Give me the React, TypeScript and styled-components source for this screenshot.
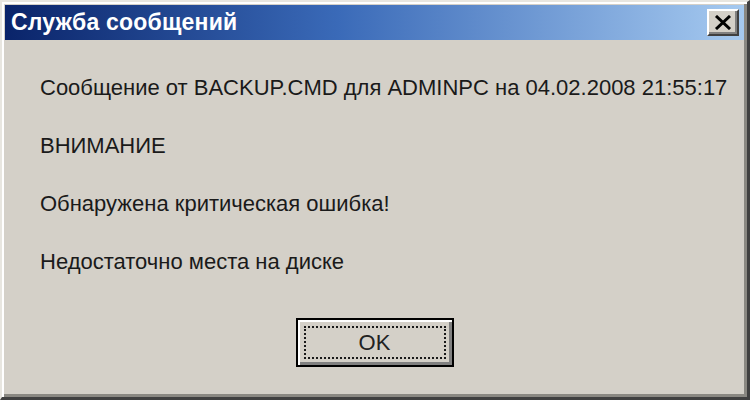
import React from "react";
import styled, { createGlobalStyle } from "styled-components";

const Global = createGlobalStyle`
  html, body { margin: 0; padding: 0; background: #d4d0c8; }
  * { box-sizing: border-box; }
`;

const Window = styled.div`
  width: 750px;
  height: 400px;
  background: #d4d0c8;
  border-top: 2px solid #e8e6e0;
  border-left: 2px solid #e8e6e0;
  border-right: 3px solid #404040;
  border-bottom: 3px solid #404040;
  box-shadow: inset 2px 2px 0 #ffffff, inset -3px -3px 0 #8a8882;
  padding: 3px;
  display: flex;
  flex-direction: column;
  font-family: "Liberation Sans", Arial, sans-serif;
`;

const TitleBar = styled.div`
  height: 35px;
  background: linear-gradient(to right, #0a246a 0%, #3a6ab8 45%, #a6caf0 100%);
  display: flex;
  align-items: center;
  justify-content: space-between;
  padding: 0 5px 0 6px;
`;

const Title = styled.span`
  color: #ffffff;
  font-weight: bold;
  font-size: 23px;
  letter-spacing: 0.2px;
`;

const CloseButton = styled.div`
  width: 32px;
  height: 27px;
  background: #d4d0c8;
  border-top: 2px solid #ffffff;
  border-left: 2px solid #ffffff;
  border-right: 2px solid #404040;
  border-bottom: 2px solid #404040;
  box-shadow: inset -2px -2px 0 #808080;
  display: flex;
  align-items: center;
  justify-content: center;
`;

const Content = styled.div`
  flex: 1;
  display: flex;
  flex-direction: column;
  padding: 37px 0 0 35px;
  gap: 36px;
`;

const Line = styled.div`
  font-size: 22px;
  color: #1a1a1a;
  line-height: 22px;
`;

const ButtonRow = styled.div`
  display: flex;
  justify-content: center;
  margin-top: auto;
  padding-bottom: 27px;
`;

const OkButton = styled.div`
  width: 158px;
  height: 49px;
  border: 2px solid #000000;
  background: #d4d0c8;
  box-shadow: inset 2px 2px 0 #ffffff, inset -3px -3px 0 #808080;
  display: flex;
  padding: 6px;
`;

const Focus = styled.div`
  flex: 1;
  border: 2px dotted #1a1a1a;
  display: flex;
  align-items: center;
  justify-content: center;
  font-size: 22px;
  color: #222;
`;

export default function App() {
  return (
    <>
      <Global />
      <Window>
        <TitleBar>
          <Title>Служба сообщений</Title>
          <CloseButton>
            <svg width="18" height="15" viewBox="0 0 18 15">
              <path d="M2 1 L16 14 M16 1 L2 14" stroke="#000" strokeWidth="3" />
            </svg>
          </CloseButton>
        </TitleBar>
        <Content>
          <Line>Сообщение от BACKUP.CMD для ADMINPC на 04.02.2008 21:55:17</Line>
          <Line>ВНИМАНИЕ</Line>
          <Line>Обнаружена критическая ошибка!</Line>
          <Line>Недостаточно места на диске</Line>
        </Content>
        <ButtonRow>
          <OkButton>
            <Focus>OK</Focus>
          </OkButton>
        </ButtonRow>
      </Window>
    </>
  );
}
